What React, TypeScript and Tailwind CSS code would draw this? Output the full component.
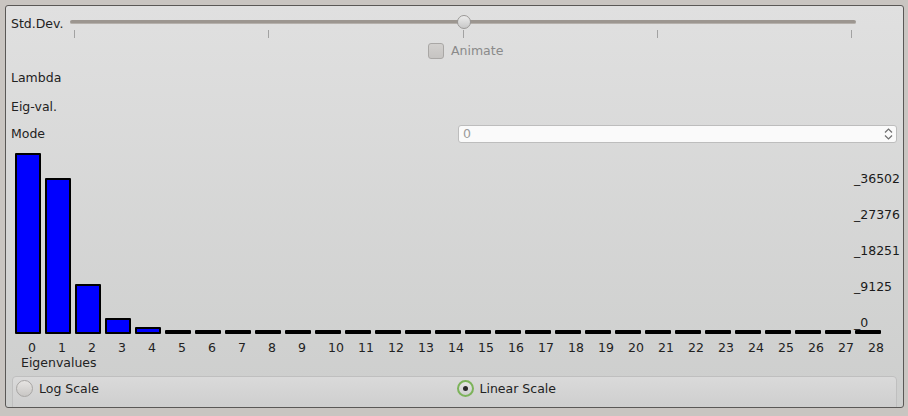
import React from "react";

// bar heights in px, taken from the eigenvalue spectrum
const barHeights = [181, 156, 50, 16, 7, 4, 4, 3, 3, 3, 4, 3, 3, 3, 3, 3, 3, 3, 3, 3, 3, 3, 3, 3, 3, 3, 3, 3, 3];

const axisLabels = [
  { text: "_36502", top: "top-[24px]" },
  { text: "_27376", top: "top-[60px]" },
  { text: "_18251", top: "top-[96px]" },
  { text: "_9125", top: "top-[132px]" },
  { text: "_0", top: "top-[168px]" },
];

const Slider = () => (
  <div className="relative w-[786px] h-[36px]">
    <div className="absolute left-0 right-0 top-[14px] h-[4px] rounded-full bg-[#9c9690] border-b border-[#b5b0ab]" />
    {[4, 198, 393, 587, 781].map((x) => (
      <div key={x} className="absolute top-[24px] h-[8px] w-px bg-[#a2a2a2]" style={{ left: x }} />
    ))}
    <div className="absolute left-[387px] top-[9px] w-[14px] h-[14px] rounded-full border border-[#9a9896] bg-gradient-to-b from-[#ececec] to-[#c8c8c8]" />
  </div>
);

const Radio = ({ checked }: { checked?: boolean }) => (
  <div
    className={
      checked
        ? "w-[17px] h-[17px] rounded-full border-2 border-[#7cb35a] bg-gradient-to-b from-[#e6e6e6] to-[#cfcfcf] flex items-center justify-center"
        : "w-[17px] h-[17px] rounded-full border border-[#a8a6a4] bg-gradient-to-b from-[#e6e4e2] to-[#c9c7c5]"
    }
  >
    {checked && <div className="w-[5px] h-[5px] rounded-full bg-[#2a2a2a]" />}
  </div>
);

export default function App() {
  return (
    <div className="w-[908px] h-[416px] bg-[#c9c5c1] pt-[5px] pl-[5px] font-['DejaVu_Sans',sans-serif] text-[12.5px] leading-[14px] text-[#222]">
      <div className="w-[899px] h-[403px] border border-[#5a5856] rounded-[3px] bg-gradient-to-b from-[#e0e0e0] to-[#cdcecd] overflow-hidden">
        {/* Std.Dev. slider */}
        <div className="h-[36px] flex items-start">
          <div className="w-[64px] pl-[5px] pt-[11px] whitespace-nowrap">Std.Dev.</div>
          <Slider />
        </div>

        {/* Animate */}
        <div className="h-[18px] flex items-center pl-[422px] gap-[7px]">
          <div className="w-[16px] h-[16px] rounded-[3px] border border-[#a9a7a5] bg-gradient-to-b from-[#d2d0ce] to-[#c6c4c2]" />
          <span className="text-[#8a8a8a]">Animate</span>
        </div>

        <div className="h-[35px] flex items-center pl-[5px]">Lambda</div>
        <div className="h-[24px] flex items-center pl-[5px]">Eig-val.</div>

        {/* Mode */}
        <div className="h-[29px] flex items-center pl-[5px]">
          <div className="w-[447px]">Mode</div>
          <div className="w-[439px] h-[18px] rounded-[3px] border border-[#bdbdbd] bg-[#fafafa] flex items-center justify-between pl-[4px] pr-[3px]">
            <span className="text-[#9a9a9a]">0</span>
            <svg width="9" height="14" viewBox="0 0 9 14" fill="none" stroke="#6e6e6e" strokeWidth="1.2">
              <path d="M1 5.5 L4.5 2 L8 5.5" />
              <path d="M1 8.5 L4.5 12 L8 8.5" />
            </svg>
          </div>
        </div>

        {/* Chart */}
        <div className="relative h-[186px] flex items-end gap-[4px] pl-[9px]">
          {barHeights.map((h, i) => (
            <div
              key={i}
              className="w-[26px] shrink-0 bg-[#0000ff] border-2 border-black rounded-[1px]"
              style={{ height: h }}
            />
          ))}
          {axisLabels.map((l) => (
            <div key={l.text} className={`absolute left-[848px] ${l.top} text-[#1a1a1a]`}>
              {l.text}
            </div>
          ))}
        </div>

        {/* Bar index labels */}
        <div className="mt-[7px] h-[14px] flex pl-[9px]">
          {barHeights.map((_, i) => (
            <div key={i} className="w-[30px] shrink-0 pl-[13px] whitespace-nowrap">
              {i}
            </div>
          ))}
        </div>
        <div className="mt-[1px] h-[14px] pl-[15px]">Eigenvalues</div>

        {/* Scale radios */}
        <div className="mt-[6px] ml-[6px] w-[885px] h-[40px] rounded-[4px] border border-[#bfbfbf] bg-gradient-to-b from-[#dadada] to-[#cbcbcb] grid grid-cols-2">
          <div className="h-[23px] flex items-center pl-[3px] gap-[6px]">
            <Radio />
            <span>Log Scale</span>
          </div>
          <div className="h-[23px] flex items-center pl-[2px] gap-[6px]">
            <Radio checked />
            <span>Linear Scale</span>
          </div>
        </div>
      </div>
    </div>
  );
}
